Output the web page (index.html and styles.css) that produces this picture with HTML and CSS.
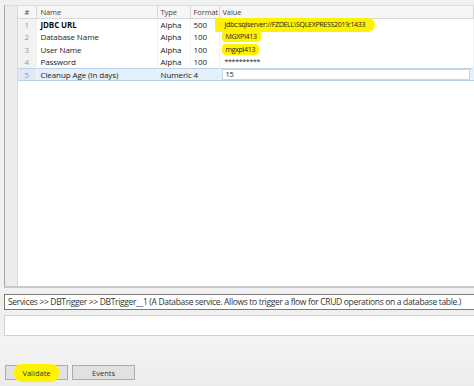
FILE: index.html
```html
<!DOCTYPE html>
<html lang="en">
<head>
    <meta charset="UTF-8">
    <title>DBTrigger</title>
    <link rel="stylesheet" href="styles.css">
</head>
<body>
    <div class="editor">
        <div class="grid">
            <div class="grid__rowhead"></div>
            <table class="grid__table">
                <thead>
                    <tr>
                        <th class="col-num">#</th>
                        <th class="col-name">Name</th>
                        <th class="col-type">Type</th>
                        <th class="col-format">Format</th>
                        <th class="col-value">Value</th>
                    </tr>
                </thead>
                <tbody>
                    <tr>
                        <td class="col-num">1</td>
                        <td class="col-name bold">JDBC URL</td>
                        <td>Alpha</td>
                        <td>500</td>
                        <td class="col-value"><span class="mark mark_long">jdbc:sqlserver://FZDELL\SQLEXPRESS2019:1433</span></td>
                    </tr>
                    <tr>
                        <td class="col-num">2</td>
                        <td class="col-name">Database Name</td>
                        <td>Alpha</td>
                        <td>100</td>
                        <td class="col-value"><span class="mark">MGXPI413</span></td>
                    </tr>
                    <tr>
                        <td class="col-num">3</td>
                        <td class="col-name">User Name</td>
                        <td>Alpha</td>
                        <td>100</td>
                        <td class="col-value"><span class="mark">mgxpi413</span></td>
                    </tr>
                    <tr>
                        <td class="col-num">4</td>
                        <td class="col-name">Password</td>
                        <td>Alpha</td>
                        <td>100</td>
                        <td class="col-value">**********</td>
                    </tr>
                    <tr class="row_active">
                        <td class="col-num">5</td>
                        <td class="col-name">Cleanup Age (In days)</td>
                        <td>Numeric</td>
                        <td>4</td>
                        <td class="col-value"><span class="cell-edit">15</span></td>
                    </tr>
                </tbody>
            </table>
        </div>

        <div class="info">Services &gt;&gt; DBTrigger &gt;&gt; DBTrigger__1 (A Database service. Allows to trigger a flow for CRUD operations on a database table.)</div>
        <div class="notes"></div>

        <div class="actions">
            <button class="btn"><span class="mark mark_btn">Validate</span></button>
            <button class="btn">Events</button>
        </div>
    </div>
</body>
</html>
```

FILE: styles.css
```css
*{box-sizing:border-box}
body{margin:0;background:#f0f0f0;font-family:"Open Sans","Noto Sans",sans-serif;font-size:8px;color:#222;letter-spacing:-0.1px}
.editor{width:474px;height:386px;padding-top:5px;display:flex;flex-direction:column}

.grid{display:flex;height:283px;margin-left:4px;background:#fff;border-left:1px solid #a8a8a8;border-bottom:2px solid #c8c8c8;border-top:1px solid #dcdcdc}
.grid__rowhead{width:13px;flex:none;background:#ececec;border-right:1px solid #dadada}
.grid__table{border-collapse:collapse;table-layout:fixed;width:456px;align-self:flex-start}
.grid__table th{height:12px;padding:0 3px;font-weight:400;font-size:7.5px;text-align:left;color:#444;background:#f6f6f6;border-right:1px solid #d6d6d6;border-bottom:1px solid #d6d6d6;white-space:nowrap}
.grid__table td{height:12.6px;padding:0 3px;white-space:nowrap;overflow:visible;border-right:1px solid #f3f3f3}
.col-num{width:18px;text-align:center!important;color:#888}
.grid__table td.col-num{background:#f2f2f2;color:#999}
.col-name{width:121px}
.grid__table .col-name{padding-left:4px}
.col-type{width:33px}
.col-format{width:29px}
.grid__table td.col-value{font-size:7px;letter-spacing:-0.3px;padding-left:5px}
.bold{font-weight:700;color:#111}

.row_active td{background:#e5f0fb;border-top:1px solid #b9d1ea;border-bottom:1px solid #b9d1ea}
.grid__table .row_active td.col-num{background:#dfe9f5}
.grid__table .row_active td.col-value{padding-left:2px}
.cell-edit{display:block;padding-left:3px;background:#fff;border:1px solid #c8d8ea;height:11px;line-height:9px;font-size:7.5px}

.mark{background:#fff200;padding:1px 4px;border-radius:4px;margin-left:-3px}
.mark_long{padding:2px 10px 3px 10px;margin-left:-10px;border-radius:3px 10px 10px 3px}
.mark_btn{padding:4px 8px;margin:0;border-radius:8px}

.info{margin:6px 0 0 4px;height:16px;line-height:14px;padding-left:3px;background:#fff;border:1px solid #7a7a7a;border-right:none;font-size:8.5px;letter-spacing:-0.33px;color:#333;white-space:nowrap;overflow:hidden}
.notes{margin:5px 0 0 4px;height:21px;background:#fff;border:1px solid #d0d0d0;border-right:none}

.actions{flex:1;display:flex;align-items:flex-end;gap:4px;padding:0 0 6px 5px;background:linear-gradient(#f5f5f5,#ececec)}
.btn{width:63px;height:15px;padding:0;font:inherit;font-size:7.5px;color:#333;background:#e1e1e1;border:1px solid #adadad;display:flex;align-items:center;justify-content:center}
```
